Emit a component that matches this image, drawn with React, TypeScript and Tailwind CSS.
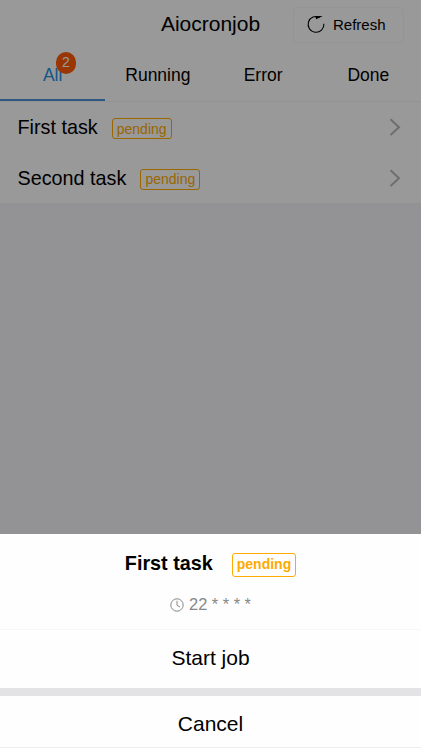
const tabs = ["All", "Running", "Error", "Done"];
const tasks = [
  { name: "First task", row: "h-[50px]" },
  { name: "Second task", row: "h-[51px]" },
];

function Chevron() {
  return (
    <svg className="mr-[19px] h-[18px] w-[14px]" viewBox="0 0 14 18" fill="none" stroke="#b8b8bd" strokeWidth="2">
      <path d="M2.5 1.2 11 9.2 2.5 17" />
    </svg>
  );
}

function RefreshIcon() {
  return (
    <svg className="-mt-[2px] h-5 w-5" viewBox="0 0 20 20" fill="none" stroke="#000" strokeWidth="1.1">
      <path d="M13.7 3.4A7.9 7.9 0 1 0 17.9 9.8" />
      <path d="M9 2.1h7.7L10.3 5.2Z" fill="#000" stroke="none" />
    </svg>
  );
}

function ClockIcon() {
  return (
    <svg className="h-[14px] w-[14px]" viewBox="0 0 14 14" fill="none" stroke="#888" strokeWidth="1">
      <circle cx="7" cy="7" r="6.2" />
      <path d="M7 2.8V7.3L10 9" />
    </svg>
  );
}

export default function App() {
  return (
    <div className="relative h-[748px] w-[421px] overflow-hidden bg-[#f5f5f9] font-['Liberation_Sans',Arial,sans-serif] text-black">
      <header className="grid h-12 grid-cols-[1fr_auto_1fr] items-center bg-white">
        <span />
        <h1 className="text-[21px] leading-6">Aiocronjob</h1>
        <button className="mt-px mr-[17px] flex h-9 w-[111px] items-center justify-self-end rounded border border-[#f7f7f7] pl-3 text-[15px]">
          <RefreshIcon />
          <span className="mt-px ml-[7px]">Refresh</span>
        </button>
      </header>
      <nav className="grid h-[54px] grid-cols-4 border-b border-[#f5f5f7] bg-white text-[17.5px]">
        {tabs.map((tab, i) => (
          <div
            key={tab}
            className={
              i === 0
                ? "flex items-center justify-center border-b-2 border-[#4c95d6] pt-[3px] text-[#268fe5]"
                : "flex items-center justify-center pt-[2px]"
            }
          >
            <span className="relative">
              {tab}
              {i === 0 && (
                <span className="absolute -top-[10px] left-[13px] flex h-[22px] w-5 items-center justify-center rounded-full bg-[#ff5b05] pb-px text-sm text-white">
                  2
                </span>
              )}
            </span>
          </div>
        ))}
      </nav>
      <main className="bg-white">
        {tasks.map((task) => (
          <div key={task.name} className={`flex items-center pl-[17.5px] ${task.row}`}>
            <span className="text-[19.8px] leading-6">{task.name}</span>
            <span className="mt-[3px] ml-[14px] flex h-[21px] items-center rounded-[3px] border border-[#ffaa00] px-1 text-sm text-[#ffaa00]">
              pending
            </span>
            <span className="ml-auto">
              <Chevron />
            </span>
          </div>
        ))}
      </main>
      <div className="absolute inset-0 bg-black/40" />
      <section className="absolute inset-x-0 bottom-0 flex h-[214px] flex-col bg-[#fefefe]">
        <div className="flex h-[60px] items-center justify-center">
          <h2 className="text-[19.8px] font-bold">First task</h2>
          <span className="mt-px ml-[19px] flex h-6 items-center rounded-[3px] border border-[#ffaa00] px-1 pb-[2px] text-sm font-bold text-[#ffaa00]">
            pending
          </span>
        </div>
        <div className="flex h-9 items-start justify-center gap-[5px] border-b border-[#f7f7f7] text-[16.4px] leading-5 text-[#888]">
          <span className="mt-1">
            <ClockIcon />
          </span>
          <span>22 * * * *</span>
        </div>
        <button className="flex h-[58px] items-center justify-center pb-[2px] text-[21px]">Start job</button>
        <div className="h-2 shrink-0 bg-[#e3e3e6]" />
        <button className="flex h-[52px] items-center justify-center border-b border-[#eeeeee] pt-[5px] text-[21px]">Cancel</button>
      </section>
    </div>
  );
}
